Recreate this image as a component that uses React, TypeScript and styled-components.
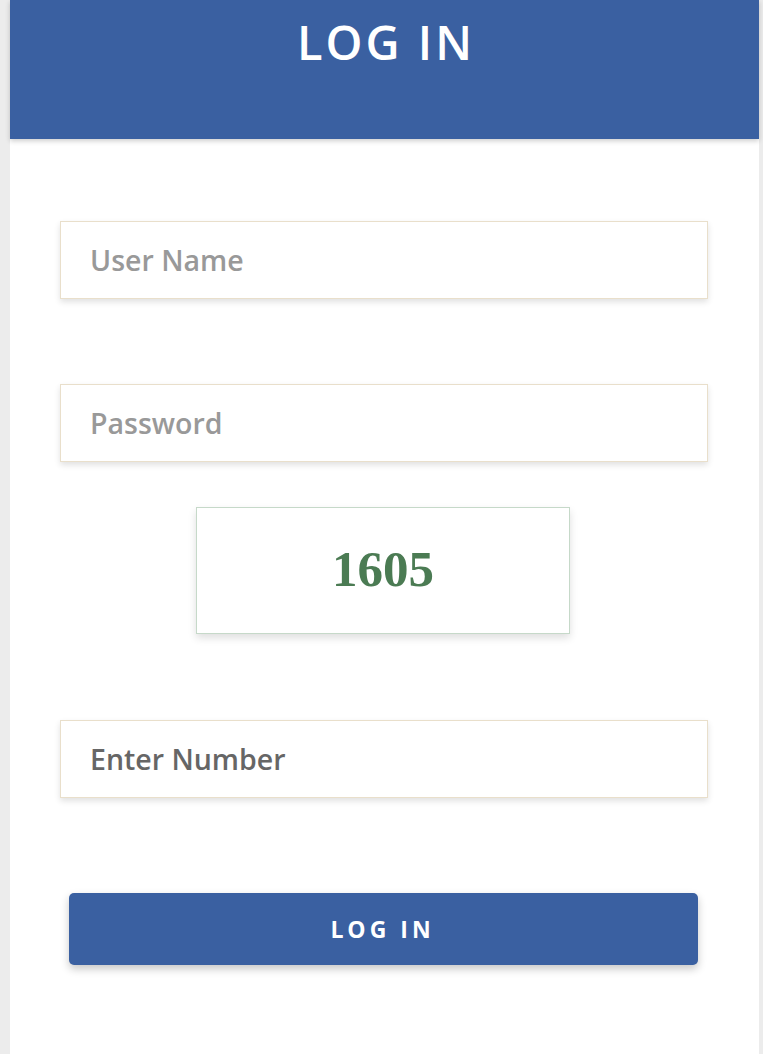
import React from "react";
import styled, { createGlobalStyle } from "styled-components";

const Global = createGlobalStyle`
  html, body { margin: 0; padding: 0; background: #ececec; }
  body { font-family: "Open Sans", "Noto Sans", sans-serif; }
  * { box-sizing: border-box; }
`;

const Page = styled.div`
  padding: 0 4px 0 10px;
  min-height: 1054px;
  display: flex;
`;

const Card = styled.div`
  flex: 1;
  background: #ffffff;
  min-height: 1054px;
  display: flex;
  flex-direction: column;
`;

const Header = styled.header`
  height: 139px;
  background: #3a60a1;
  box-shadow: 0 2px 5px rgba(0, 0, 0, 0.2);
  display: flex;
  justify-content: center;
  padding-top: 10px;
`;

const Title = styled.h1`
  margin: 0;
  color: #ffffff;
  font-family: "Open Sans", sans-serif;
  font-weight: 600;
  font-size: 47px;
  line-height: 64px;
  letter-spacing: 3px;
  padding-left: 3px;
`;

const Form = styled.div`
  display: flex;
  flex-direction: column;
  align-items: stretch;
  padding: 82px 51px 0 50px;
`;

const Field = styled.div<{ $mt: number }>`
  margin-top: ${(p) => p.$mt}px;
  height: 78px;
  border: 1.5px solid #e9dfcb;
  background: #fff;
  box-shadow: 0 3px 6px rgba(0, 0, 0, 0.12);
  display: flex;
  align-items: center;
  padding-left: 29px;
`;

const FieldText = styled.span<{ $filled?: boolean }>`
  font-family: "Open Sans", sans-serif;
  font-weight: 600;
  font-size: 28.5px;
  color: ${(p) => (p.$filled ? "#666666" : "#999999")};
`;

const CaptchaRow = styled.div`
  display: flex;
  justify-content: center;
  margin-top: 45px;
  padding-right: 2px;
`;

const Captcha = styled.div`
  width: 374px;
  height: 127px;
  border: 1.5px solid #c6d9c9;
  background: #fff;
  box-shadow: 0 4px 8px rgba(0, 0, 0, 0.13);
  display: flex;
  align-items: center;
  justify-content: center;
  padding-bottom: 4px;
`;

const CaptchaText = styled.span`
  font-family: "Liberation Serif", "Times New Roman", serif;
  font-weight: 700;
  font-size: 51px;
  color: #4b7b53;
`;

const Button = styled.button`
  margin: 95px 10px 0 9px;
  height: 72px;
  border: none;
  border-radius: 5px;
  background: #3a60a1;
  box-shadow: 0 4px 8px rgba(0, 0, 0, 0.22);
  color: #ffffff;
  font-family: "Open Sans", sans-serif;
  font-weight: 700;
  font-size: 23px;
  letter-spacing: 4px;
  padding-left: 4px;
  cursor: pointer;
`;

export default function App() {
  return (
    <>
      <Global />
      <Page>
        <Card>
          <Header>
            <Title>LOG IN</Title>
          </Header>
          <Form>
            <Field $mt={0}>
              <FieldText>User Name</FieldText>
            </Field>
            <Field $mt={85}>
              <FieldText>Password</FieldText>
            </Field>
            <CaptchaRow>
              <Captcha>
                <CaptchaText>1605</CaptchaText>
              </Captcha>
            </CaptchaRow>
            <Field $mt={86}>
              <FieldText $filled>Enter Number</FieldText>
            </Field>
            <Button>LOG IN</Button>
          </Form>
        </Card>
      </Page>
    </>
  );
}
